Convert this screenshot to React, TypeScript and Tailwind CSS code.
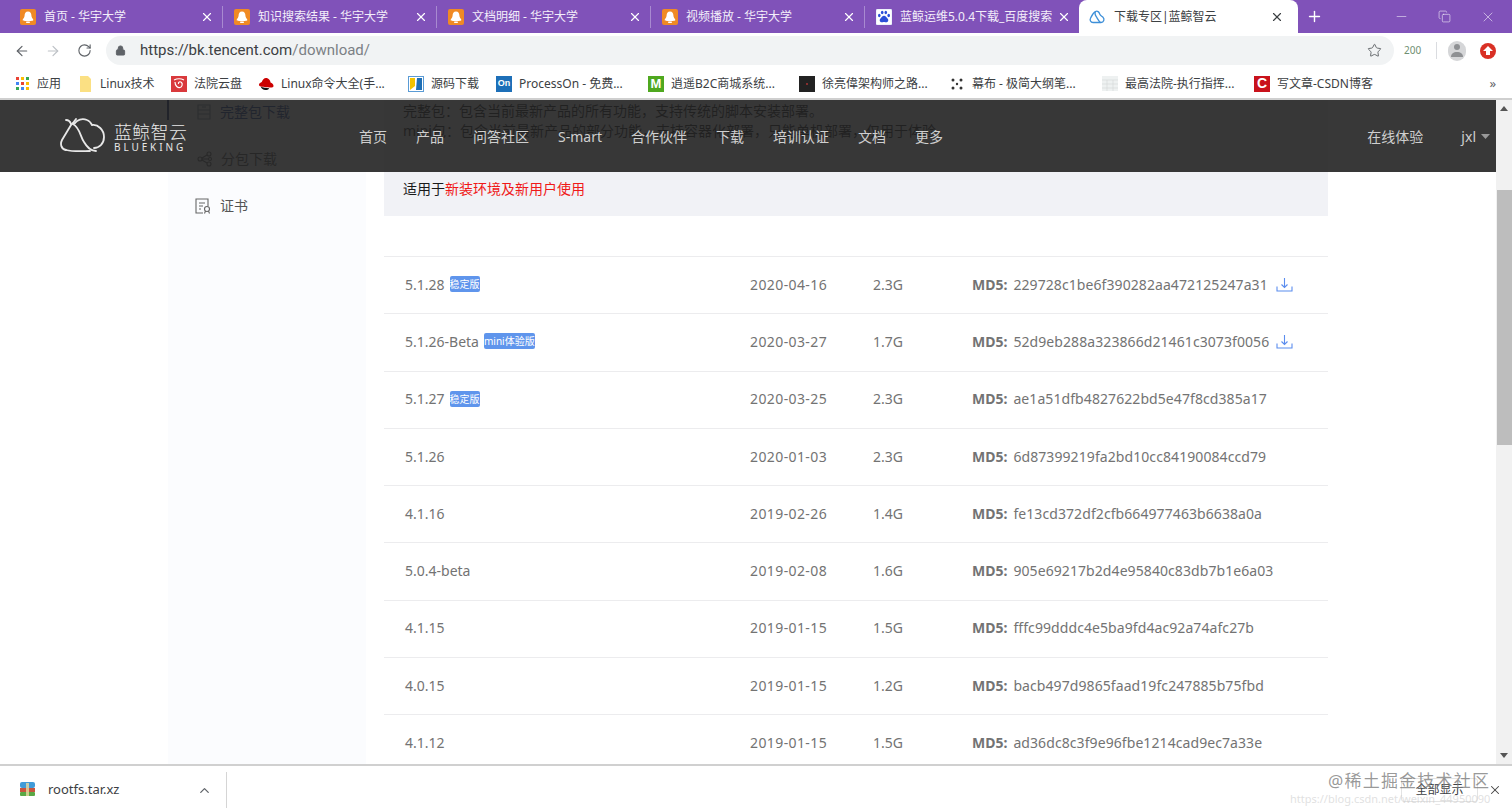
import { ArrowLeft, ArrowRight, ChevronUp, Copy, Lock, Minus, Plus, RotateCw, Star, X } from 'lucide-react';
import type { ReactNode } from 'react';

const FONT = 'font-["Noto_Sans","Noto_Sans_CJK_SC",sans-serif]';

const rows = [
  { version: '5.1.28', badge: '稳定版', date: '2020-04-16', size: '2.3G', md5: '229728c1be6f390282aa472125247a31', download: true },
  { version: '5.1.26-Beta', badge: 'mini体验版', date: '2020-03-27', size: '1.7G', md5: '52d9eb288a323866d21461c3073f0056', download: true },
  { version: '5.1.27', badge: '稳定版', date: '2020-03-25', size: '2.3G', md5: 'ae1a51dfb4827622bd5e47f8cd385a17' },
  { version: '5.1.26', date: '2020-01-03', size: '2.3G', md5: '6d87399219fa2bd10cc84190084ccd79' },
  { version: '4.1.16', date: '2019-02-26', size: '1.4G', md5: 'fe13cd372df2cfb664977463b6638a0a' },
  { version: '5.0.4-beta', date: '2019-02-08', size: '1.6G', md5: '905e69217b2d4e95840c83db7b1e6a03' },
  { version: '4.1.15', date: '2019-01-15', size: '1.5G', md5: 'fffc99dddc4e5ba9fd4ac92a74afc27b' },
  { version: '4.0.15', date: '2019-01-15', size: '1.2G', md5: 'bacb497d9865faad19fc247885b75fbd' },
  { version: '4.1.12', date: '2019-01-15', size: '1.5G', md5: 'ad36dc8c3f9e96fbe1214cad9ec7a33e' },
];

const navItems = ['首页', '产品', '问答社区', 'S-mart', '合作伙伴', '下载', '培训认证', '文档', '更多'];

function BellFavicon() {
  return (
    <svg width="16" height="16" viewBox="0 0 16 16" className="shrink-0">
      <rect width="16" height="16" rx="2" fill="#f08a24" />
      <path d="M8 2.5c-2.4 0-3.4 2-3.4 4 0 2-1.4 3-1.9 4.3-.3.8.4 1.2 5.3 1.2s5.600-.4 5.300-1.200C12.800 9.500 11.400 8.500 11.400 6.500c0-2-1-4-3.400-4z" fill="#fff" />
      <rect x="6" y="12.600" width="4" height="1.400" rx=".7" fill="#fff" />
    </svg>
  );
}

function BaiduFavicon() {
  return (
    <svg width="16" height="16" viewBox="0 0 16 16" className="shrink-0">
      <rect width="16" height="16" rx="1.500" fill="#fff" stroke="#c7d6f5" strokeWidth=".6" />
      <g fill="#2b4fd8">
        <ellipse cx="3.300" cy="6.500" rx="1.300" ry="1.700" />
        <ellipse cx="6.200" cy="3.500" rx="1.300" ry="1.800" />
        <ellipse cx="9.800" cy="3.500" rx="1.300" ry="1.800" />
        <ellipse cx="12.700" cy="6.500" rx="1.300" ry="1.700" />
        <path d="M8 6.800c-1.800 0-2.300 1.700-3.500 2.700-1.300 1.100-1 3.800 1.300 3.800 1 0 1.400-.3 2.200-.3s1.200.3 2.200.3c2.300 0 2.600-2.700 1.300-3.800C10.300 8.500 9.800 6.800 8 6.800z" />
      </g>
    </svg>
  );
}

function CloudFavicon() {
  return (
    <svg width="17" height="16" viewBox="0 0 17 16" fill="none" stroke="#3d8fd8" strokeWidth="1.300" className="shrink-0">
      <path d="M4 13.500C1.500 13.500.6 11 1.500 9.200 2.500 7 4 4 6.500 2.500c2-1 3.500.5 4.200 2.500.6 1.800 2 2 3.300 3.200 1.900 1.900.8 5.300-2 5.300H4z" />
      <path d="M6.500 2.500C5 5 6.800 7 8 8.800c1 1.600 2 3.700 3.500 4.700" />
    </svg>
  );
}

function Tab({ title, icon, last }: { title: string; icon: ReactNode; last?: boolean }) {
  return (
    <div className={`flex h-[22px] w-[214px] shrink-0 items-center pl-[11px] pr-[8px] ${last ? '' : 'border-r border-[#a88ad0]'}`}>
      {icon}
      <span className="ml-2 flex-1 truncate text-[12px] text-[#f3eefa]">{title}</span>
      <X size={14} strokeWidth={2} className="text-white" />
    </div>
  );
}

function TabBar() {
  return (
    <div className="flex h-[33px] shrink-0 items-end bg-[#8052b9] pl-[9px]">
      <div className="flex h-[33px] items-center">
        <Tab title="首页 - 华宇大学" icon={<BellFavicon />} />
        <Tab title="知识搜索结果 - 华宇大学" icon={<BellFavicon />} />
        <Tab title="文档明细 - 华宇大学" icon={<BellFavicon />} />
        <Tab title="视频播放 - 华宇大学" icon={<BellFavicon />} />
        <Tab title="蓝鲸运维5.0.4下载_百度搜索" icon={<BaiduFavicon />} last />
      </div>
      <div className="flex h-[33px] w-[219px] shrink-0 items-center rounded-t-[8px] bg-white pl-[10px] pr-[14px]">
        <CloudFavicon />
        <span className="ml-2 flex-1 truncate text-[12px] text-[#3c4043]">下载专区|蓝鲸智云</span>
        <X size={14} strokeWidth={2} className="text-[#3c4043]" />
      </div>
      <div className="flex h-[33px] flex-1 items-center text-white">
        <Plus size={17} strokeWidth={2} className="ml-[8px]" />
        <div className="ml-auto flex items-center gap-[29px] pr-[16px] text-[#e9e1f4]">
          <Minus size={15} strokeWidth={1} />
          <Copy size={13} strokeWidth={1.200} />
          <X size={16} strokeWidth={1} />
        </div>
      </div>
    </div>
  );
}

function Toolbar() {
  return (
    <div className="flex h-[33px] shrink-0 items-center bg-white pl-[14px] pr-[14px] pt-[2px]">
      <ArrowLeft size={16} strokeWidth={1.800} className="text-[#5f6368]" />
      <ArrowRight size={16} strokeWidth={1.800} className="ml-[15px] text-[#bdc1c6]" />
      <RotateCw size={15} strokeWidth={1.800} className="ml-[16px] text-[#5f6368]" />
      <div className="ml-[14px] flex h-[29px] w-[1288px] items-center rounded-full bg-[#f1f3f4] pl-[9px] pr-[12px]">
        <Lock size={11} fill="#5f6368" className="text-[#5f6368]" />
        <span className='ml-[14px] flex-1 font-["Roboto",sans-serif] text-[15px] text-[#3c4043]'>
          https://bk.tencent.com<span className="text-[#7b8085]">/download/</span>
        </span>
        <Star size={15} strokeWidth={1.500} className="text-[#5f6368]" />
      </div>
      <span className="ml-[10px] w-[20px] text-[10px] text-[#6f8f72]">200</span>
      <div className="ml-[12px] h-[17px] w-px bg-[#dadce0]" />
      <div className="ml-[11px] flex h-[20px] w-[18px] items-center justify-center rounded-full bg-[#d5d6d8]">
        <svg width="12" height="15" viewBox="0 0 12 15" fill="#8e9093">
          <circle cx="6" cy="4" r="3" />
          <path d="M0 14c0-3.500 2.500-5 6-5s6 1.500 6 5z" />
        </svg>
      </div>
      <div className="ml-[14px] flex h-[16px] w-[16px] items-center justify-center rounded-full bg-[#d93025]">
        <svg width="10" height="10" viewBox="0 0 10 10" fill="#fff">
          <path d="M5 0 10 5H7v4H3V5H0z" />
        </svg>
      </div>
    </div>
  );
}

function Bookmark({ label, icon, width }: { label: string; icon: ReactNode; width: string }) {
  return (
    <div className={`flex shrink-0 items-center ${width}`}>
      <span className="flex w-[16px] shrink-0 justify-center">{icon}</span>
      <span className="ml-[7px] truncate text-[12px] text-[#3c4043]">{label}</span>
    </div>
  );
}

function AppsIcon() {
  const colors = ['#ea4335', '#fbbc04', '#34a853', '#4285f4', '#ea4335', '#fbbc04', '#34a853', '#4285f4', '#fbbc04'];
  return (
    <span className="grid grid-cols-3 gap-[2px]">
      {colors.map((c, i) => (
        <svg key={i} width="3" height="3"><rect width="3" height="3" fill={c} /></svg>
      ))}
    </span>
  );
}

function Bookmarks() {
  return (
    <div className="flex h-[34px] shrink-0 items-center border-b-2 border-[#cfcfcf] bg-white pl-[14px] pt-[3px]">
      <Bookmark width="w-[63px]" label="应用" icon={<AppsIcon />} />
      <Bookmark width="w-[94px]" label="Linux技术" icon={
        <svg width="13" height="16" viewBox="0 0 13 16"><path d="M1 0h8l3 3v13H1z" fill="#fbe083" /></svg>
      } />
      <Bookmark width="w-[87px]" label="法院云盘" icon={
        <svg width="16" height="16" viewBox="0 0 16 16">
          <rect width="16" height="16" fill="#d9393c" />
          <path d="M4 6c0 4 3 6 5 5.500S12 8 10.500 6.500 7 6 7.500 8M3 4c3-1.500 7-1.500 10 0" fill="none" stroke="#fff" strokeWidth="1.200" />
        </svg>
      } />
      <Bookmark width="w-[150px]" label="Linux命令大全(手..." icon={
        <svg width="17" height="14" viewBox="0 0 17 14">
          <path d="M1 8c0-2 2-2 3-3 1-3 3-5 6-4 2 .7 3 2.500 3.300 4.500 1.500.7 3.200 2 3.200 3.500 0 2-3 2-6 1.500C6 10 1 10 1 8z" fill="#cc0000" />
          <path d="M3 10c2 1 6 1.500 9 1.500-1 1.500-2.500 2-4 2-2.500 0-4.500-1.500-5-3.500z" fill="#111" />
        </svg>
      } />
      <Bookmark width="w-[88px]" label="源码下载" icon={
        <svg width="16" height="16" viewBox="0 0 16 16">
          <rect x=".5" y=".5" width="15" height="15" fill="#fff" stroke="#5a9bd5" />
          <path d="M2 2h5v8l-5 4z" fill="#f2c200" />
          <path d="M9 2h5v12H8z" fill="#1f6fb5" />
        </svg>
      } />
      <Bookmark width="w-[152px]" label="ProcessOn - 免费..." icon={
        <span className='flex h-[16px] w-[16px] items-center justify-center bg-[#1d6fb8] font-["Liberation_Sans",sans-serif] text-[9px] font-bold text-white'>On</span>
      } />
      <Bookmark width="w-[151px]" label="逍遥B2C商城系统..." icon={
        <span className='flex h-[16px] w-[16px] items-center justify-center bg-[#4fa81f] font-["Liberation_Sans",sans-serif] text-[13px] font-bold text-white'>M</span>
      } />
      <Bookmark width="w-[150px]" label="徐亮偉架构师之路..." icon={
        <svg width="16" height="16" viewBox="0 0 16 16"><rect width="16" height="16" fill="#222" /><circle cx="8" cy="8" r="1" fill="#a33" /></svg>
      } />
      <Bookmark width="w-[153px]" label="幕布 - 极简大纲笔..." icon={
        <svg width="12" height="12" viewBox="0 0 12 12" fill="#333">
          <circle cx="2" cy="2" r="1.500" /><circle cx="10" cy="2" r="1.500" /><circle cx="6" cy="6" r="1.200" /><circle cx="2" cy="10" r="1.500" /><circle cx="10" cy="10" r="1.500" />
        </svg>
      } />
      <Bookmark width="w-[152px]" label="最高法院-执行指挥..." icon={
        <svg width="16" height="15" viewBox="0 0 16 15"><rect width="16" height="15" fill="#eef1f1" /><path d="M0 4h16M0 8h16M0 12h16M5 4v11M11 4v11" stroke="#d5dada" strokeWidth=".7" /></svg>
      } />
      <Bookmark width="w-[200px]" label="写文章-CSDN博客" icon={
        <span className='flex h-[16px] w-[16px] items-center justify-center bg-[#c9121b] font-["Liberation_Sans",sans-serif] text-[14px] font-bold text-white'>C</span>
      } />
      <span className="ml-auto pr-[16px] text-[13px] text-[#5f6368]">»</span>
    </div>
  );
}

function BlueKingLogo() {
  return (
    <div className="flex w-[127px] shrink-0 items-center text-[#e8e8e8]">
      <svg width="45" height="36" viewBox="0 0 45 36" fill="none" stroke="currentColor" strokeWidth="1.800" strokeLinecap="round" className="shrink-0">
        <path d="M6 32C1 31 0 26 2 22L11 7C12 5 14 5 15 5 17 2 22 0 27 2 30 3 31 5 32 7 38 6 44 12 44 19 44 26 39 30 34 30" />
        <path d="M13 6C20 10 20 18 24 24 27 29 30 33 36 33" />
        <path d="M6 32C14 34 24 33 30 33" />
        <path d="M11 6C10 3 8 2 6 2M13 5 16 1" />
      </svg>
      <div className="ml-[9px] mt-[4px] flex flex-col items-start whitespace-nowrap">
        <span className="text-[18px] leading-[19px] font-light tracking-[0.3px]">蓝鲸智云</span>
        <span className="text-[10px] leading-[11px] tracking-[2.900px]">BLUEKING</span>
      </div>
    </div>
  );
}

function SiteHeader() {
  return (
    <div className="absolute left-0 right-[16px] top-0 flex h-[72px] items-center bg-[#222222]/90 pl-[60px] pr-[6px] text-[14px] text-[#cfcfcf]">
      <BlueKingLogo />
      <nav className="ml-[172px] flex items-center gap-[29px]">
        {navItems.map((item) => (
          <span key={item}>{item}</span>
        ))}
      </nav>
      <span className="ml-auto">在线体验</span>
      <span className="ml-[38px]">jxl</span>
      <svg width="9" height="5" viewBox="0 0 9 5" className="ml-[5px]"><path d="M0 0h9L4.500 5z" fill="#999" /></svg>
    </div>
  );
}

function Sidebar() {
  return (
    <aside className="w-[198px] shrink-0 bg-[#fbfcfe]">
      <ul className="-mt-[12px] text-[14px]">
        <li className="relative flex h-[47px] items-center pl-[29px] text-[#1c3f94]">
          <span className="absolute -left-[1px] top-0 h-[32px] w-[2px] bg-[#1c2f70]" />
          <svg width="14" height="16" viewBox="0 0 14 16" fill="none" stroke="#8a93a8" strokeWidth="1.200" className="shrink-0">
            <path d="M1 1h12v14H1zM1 6h12M1 10h12M5 3h4" />
          </svg>
          <span className="ml-[9px]">完整包下载</span>
        </li>
        <li className="flex h-[47px] items-center pl-[29px] text-[#555]">
          <svg width="16" height="16" viewBox="0 0 16 16" fill="none" stroke="#666" strokeWidth="1.100" className="shrink-0">
            <circle cx="3" cy="8" r="2" /><circle cx="12" cy="3" r="2" /><circle cx="13" cy="8" r="1.500" /><circle cx="12" cy="13" r="2" />
            <path d="M5 7l5-3M5 9l5 3M5 8h6.500" />
          </svg>
          <span className="ml-[8px]">分包下载</span>
        </li>
        <li className="flex h-[47px] items-center pl-[27px] text-[#555]">
          <svg width="16" height="16" viewBox="0 0 16 16" fill="none" stroke="#666" strokeWidth="1.100" className="shrink-0">
            <path d="M8 15H1V1h12v7M4 5h6M4 8h4M4 11h2" />
            <circle cx="12" cy="11" r="2.500" /><path d="M10.500 13l-1 2.500M13.500 13l1 2.500" />
          </svg>
          <span className="ml-[9px]">证书</span>
        </li>
      </ul>
    </aside>
  );
}

function DownloadIcon() {
  return (
    <svg width="17" height="15" viewBox="0 0 17 15" fill="none" stroke="#5b8dee" strokeWidth="1.100" className="shrink-0">
      <path d="M8.500 1v9M5.500 7.500l3 3 3-3M1 9.500V14h15V9.500" />
    </svg>
  );
}

function Notice() {
  return (
    <div className="bg-[#f1f2f6] pb-[17px] pl-[19px] pt-px text-[14px] leading-[20px] text-[#1a1a1a]">
      <p>完整包：包含当前最新产品的所有功能，支持传统的脚本安装部署。</p>
      <p>mini包：包含当前最新产品的部分功能，支持容器化部署，只能单机部署，仅用于体验。</p>
      <p className="mt-[38px]">
        适用于<span className="text-[#f01919]">新装环境及新用户使用</span>
      </p>
    </div>
  );
}

function ReleaseTable() {
  return (
    <div className="mt-[40px] text-[14px] text-[#737373]">
      {rows.map((row) => (
        <div key={row.version} className="grid h-[57.300px] grid-cols-[345px_123px_99px_1fr] items-center border-t border-[#ececee] pb-[2px] pl-[21px]">
          <div className="flex items-center">
            <span>{row.version}</span>
            {row.badge && (
              <span className="ml-[5px] rounded-[2px] bg-[#5f95ec] text-[10px] leading-[16px] text-white">{row.badge}</span>
            )}
          </div>
          <span className="tracking-[0.4px]">{row.date}</span>
          <span>{row.size}</span>
          <div className="flex items-center">
            <span className="font-bold">MD5:</span>
            <span className="ml-[6px] w-[263px] shrink-0 tracking-[0.08px]">{row.md5}</span>
            {row.download && <DownloadIcon />}
          </div>
        </div>
      ))}
    </div>
  );
}

function Scrollbar() {
  return (
    <div className="flex w-[16px] shrink-0 flex-col items-center bg-[#f1f1f1]">
      <svg width="8" height="5" viewBox="0 0 8 5" className="mt-[6px]"><path d="M4 0l4 5H0z" fill="#555" /></svg>
      <div className="mt-[79px] h-[255px] w-[15px] bg-[#bdbdbd]" />
      <svg width="8" height="5" viewBox="0 0 8 5" className="mb-[6px] mt-auto"><path d="M0 0h8L4 5z" fill="#555" /></svg>
    </div>
  );
}

function DownloadShelf() {
  return (
    <div className="relative flex h-[47px] shrink-0 items-center border-t-2 border-[#d0d0d0] bg-white pl-[20px] pt-[3px]">
      <svg width="15" height="16" viewBox="0 0 15 16" className="shrink-0">
        <rect width="15" height="6" rx="2" fill="#3f9bd8" />
        <rect y="6" width="15" height="4" fill="#c8553d" />
        <rect y="10" width="15" height="4" rx="1" fill="#5aa845" />
        <rect x="6" y="1" width="3" height="13" fill="#e8d9a0" opacity=".8" />
      </svg>
      <span className="ml-[13px] w-[149px] text-[13px] text-[#3c4043]">rootfs.tar.xz</span>
      <ChevronUp size={15} strokeWidth={2} className="text-[#5f6368]" />
      <div className="ml-[14px] h-[36px] w-px bg-[#d5d5d5]" />
      <div className="ml-auto mr-[10px] flex items-center">
        <span className="flex h-[24px] w-[77px] items-center justify-center rounded-[3px] border border-[#e3e3e3] text-[12px] text-[#3c4043]">全部显示</span>
        <X size={14} strokeWidth={1.800} className="ml-[10px] text-[#444]" />
      </div>
      {/* site watermarks sit on top of the shelf */}
      <span className="absolute left-[1328px] top-[2px] text-[17px] leading-[26px] tracking-[1.200px] text-[#777]/75">@稀土掘金技术社区</span>
      <span className="absolute left-[1290px] top-[25px] text-[11px] leading-[16px] text-[#ccc]/60">https://blog.csdn.net/weixin_44950090</span>
    </div>
  );
}

export default function App() {
  return (
    <div className={`flex h-[811px] w-[1512px] flex-col overflow-hidden bg-white ${FONT}`}>
      <TabBar />
      <Toolbar />
      <Bookmarks />
      <div className="relative flex min-h-0 flex-1 overflow-hidden">
        <div className="flex min-w-0 flex-1 pl-[168px]">
          <Sidebar />
          <main className="ml-[18px] w-[944px] shrink-0">
            <Notice />
            <ReleaseTable />
          </main>
        </div>
        <Scrollbar />
        <SiteHeader />
      </div>
      <DownloadShelf />
    </div>
  );
}
